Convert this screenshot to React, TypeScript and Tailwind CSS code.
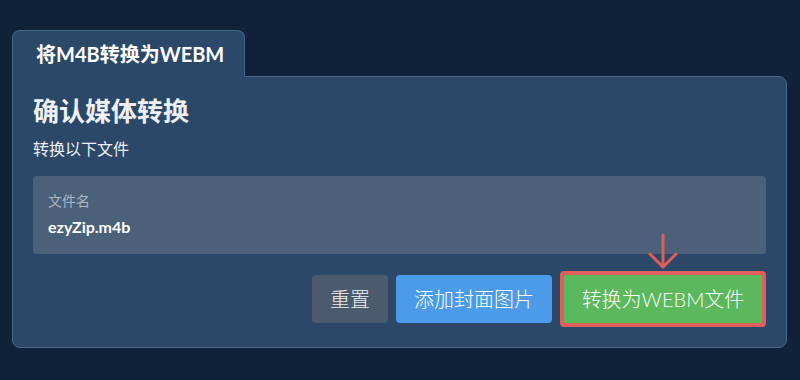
import React from "react";

const font = { fontFamily: "Lato, 'Noto Sans CJK SC', sans-serif" };

function DownArrow() {
  return (
    <svg
      className="pointer-events-none absolute left-[88px] top-[-38px]"
      width="30"
      height="38"
      viewBox="0 0 30 38"
      fill="none"
      stroke="#e05d5a"
      strokeWidth="3"
      strokeLinecap="round"
      strokeLinejoin="round"
    >
      <path d="M15 2 V34" />
      <path d="M2 21 L15 34 L28 21" />
    </svg>
  );
}

export default function App() {
  return (
    <div
      className="min-h-[380px] w-[800px] bg-[#0f2239] pl-[12px] pr-[13px] pt-[30px]"
      style={font}
    >
      <div className="flex">
        <div className="relative z-10 -mb-px flex h-[47px] w-[233px] items-center rounded-t-[8px] border border-b-0 border-[#48668a] bg-[#2c4868] pl-[23px]">
          <span className="text-[20px] font-bold leading-[26px] text-white">将M4B转换为WEBM</span>
        </div>
      </div>
      <div className="h-[272px] rounded-b-[8px] rounded-tr-[8px] border border-[#48668a] bg-[#2c4868] px-[20px] pt-[17px]">
        <h1 className="text-[26px] font-bold leading-[34px] text-[#eceff3]">确认媒体转换</h1>
        <p className="mt-[10px] text-[16px] leading-[22px] text-[#eceff3]">转换以下文件</p>
        <div className="mt-[16px] flex h-[78px] flex-col justify-center rounded-[4px] bg-[#4b6079] px-[15px]">
          <span className="text-[14px] leading-[18px] text-[#aab6c4]">文件名</span>
          <span className="mt-[6px] text-[16px] font-bold leading-[22px] text-white">ezyZip.m4b</span>
        </div>
        <div className="mt-[17px] flex items-center justify-end gap-[8px]">
          <button className="h-[48px] rounded-[4px] bg-[#4b5b6d] px-[18px] text-[20px] font-light text-[#eef1f4]">重置</button>
          <button className="h-[48px] rounded-[4px] bg-[#4b9be8] px-[18px] text-[20px] font-light text-white">添加封面图片</button>
          <div className="relative">
            <DownArrow />
            <button className="h-[56px] w-[206px] rounded-[4px] border-[4px] border-[#df5f5b] bg-[#5cb85c] text-[20px] font-light text-white">
              转换为WEBM文件
            </button>
          </div>
        </div>
      </div>
    </div>
  );
}
